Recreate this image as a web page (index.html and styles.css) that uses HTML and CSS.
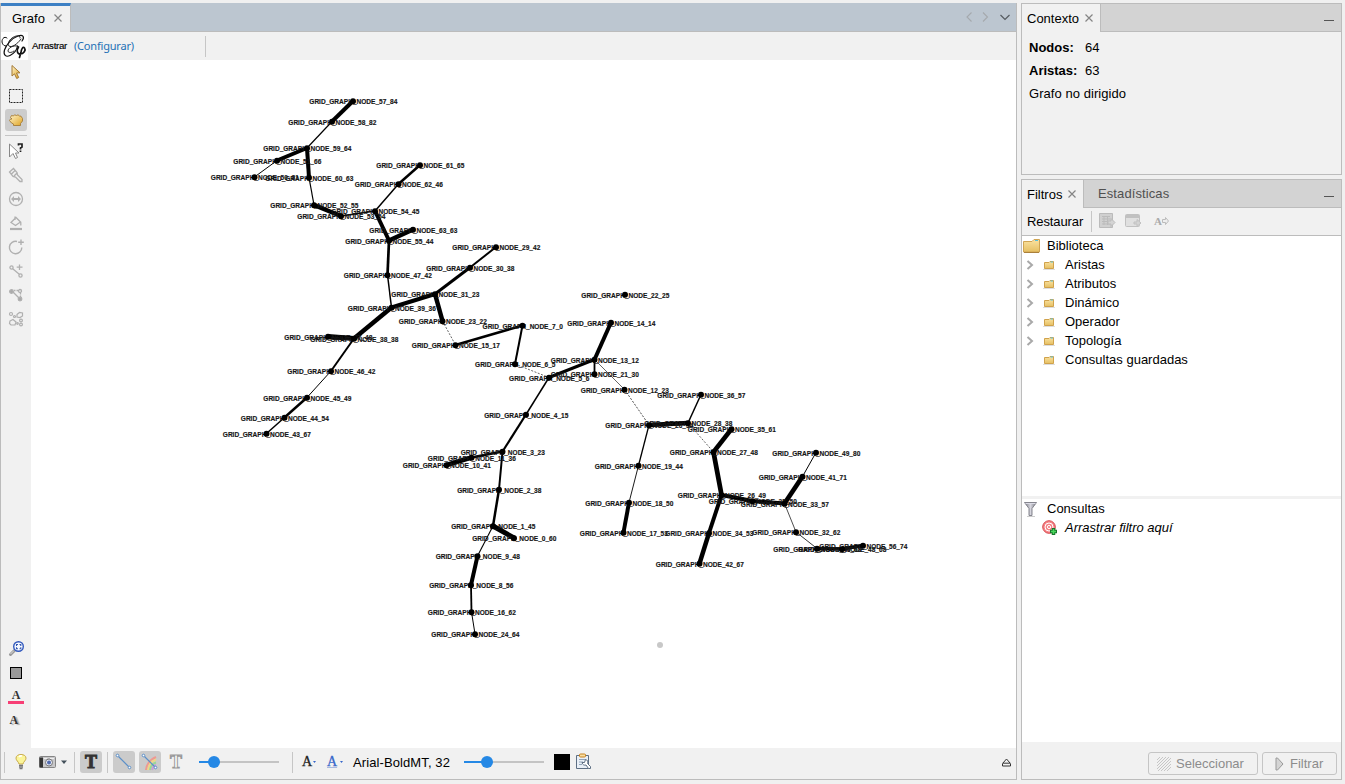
FILE: index.html
```html
<!DOCTYPE html>
<html lang="es">
<head>
<meta charset="utf-8">
<title>Grafo</title>
<link rel="stylesheet" href="styles.css">
</head>
<body>
<svg class="defs" width="0" height="0">
  <defs>
    <linearGradient id="gold" x1="0" y1="0" x2="1" y2="1"><stop offset="0" stop-color="#fff3cb"/><stop offset="1" stop-color="#dfa423"/></linearGradient>
    <linearGradient id="folder" x1="0" y1="0" x2="0" y2="1"><stop offset="0" stop-color="#fbe3a2"/><stop offset="1" stop-color="#e5bf62"/></linearGradient>
    <linearGradient id="metal" x1="0" y1="0" x2="1" y2="0"><stop offset="0" stop-color="#77777f"/><stop offset=".5" stop-color="#d6d6de"/><stop offset="1" stop-color="#75757f"/></linearGradient>
    <symbol id="small-folder" viewBox="0 0 12 10"><path d="M1.500 8.500V2.500H6L7 1.500H10.500V8.500Z" fill="url(#folder)" stroke="#d0a24c"/><path d="M7.500 2h2.500" stroke="#5bc0dc"/><path d="M0 9.500h12" stroke="#ddd"/></symbol>
    <symbol id="chevron" viewBox="0 0 8 10"><path d="M1.500 1L6 5L1.500 9" fill="none" stroke="#a9a9a9" stroke-width="2"/></symbol>
    <symbol id="close" viewBox="0 0 8 8"><path d="M.5 .5l7 7M7.500 .5l-7 7" stroke="#858585" stroke-width="1.200"/></symbol>
  </defs>
</svg>
<main class="window">
  <section class="panel graph-panel">
    <header class="tabs main-tabs">
      <div class="tab tab-main">Grafo <svg class="close" width="8" height="8"><use href="#close"/></svg></div>
      <svg class="tab-nav" width="46" height="12" viewBox="0 0 46 12" fill="none"><path d="M5.500 1.500L1 6l4.500 4.500M17 1.500L21.500 6L17 10.500" stroke="#a5a9ad" stroke-width="1.100"/><path d="M34.500 4L39 8.500L43.500 4" stroke="#555b60" stroke-width="1.200"/></svg>
    </header>
    <div class="configbar">
      <svg class="logo" width="27" height="28" viewBox="0 0 27 28" fill="none" stroke="#111" stroke-linecap="round">
        <path d="M5 14C1 14 0 9 2 6.500C3 5 5 5 6 6" stroke-width="1"/>
        <path d="M21 9C24 5 22 2 17 4C11 6 5 13 3.500 18C2 23 5 25.500 9 23.500C14 21 16 17 16.500 14" stroke-width="1.200"/>
        <path d="M19 6C20 3 15 3 11 6C7 9 6 14 9 14.500C13 15 18 10 20 7" stroke-width=".9"/>
        <path d="M16.500 14C12 13 7 16 7 19C7 21 11 21 13 19" stroke-width=".9"/>
        <path d="M17.500 15C15.500 18 16 22 19 22C23 22 25 18 23.500 16C22 14 20.500 17 20 20L18.500 25.500" stroke-width="1.700"/>
      </svg>
      <span class="mode">Arrastrar</span><span class="configure">(Configurar)</span><i class="vline config-line"></i>
    </div>
    <div class="workspace">
      <aside class="tools">
        <div class="tool"><svg width="16" height="16" viewBox="0 0 16 16"><path d="M4 1.500V12L6.500 9.800L8.700 14.500L10.700 13.500L8.500 9L12 8.800Z" fill="url(#gold)" stroke="#a27834"/></svg></div>
        <div class="tool"><svg width="16" height="16" viewBox="0 0 16 16"><rect x="1.500" y="1.500" width="13" height="13" fill="none" stroke="#222" stroke-dasharray="2 1"/></svg></div>
        <div class="tool"><span class="tool-button"><svg width="16" height="16" viewBox="0 0 16 16"><path d="M5.500 13.500V12L3.500 11L1.500 8.500L2.500 7H4L2.500 5.500L3.500 3.500L5.500 4L6.500 2.800L8.500 3.500L10 2.800L11.500 4L13 4.200L14.500 6.500V9L12.500 11.500V13.500Z" fill="url(#gold)" stroke="#a67c35" stroke-width=".9"/></svg></span></div>
        <div class="tool-sep"></div>
        <div class="tool"><svg width="16" height="18" viewBox="0 0 16 18"><path d="M1.500 2V15L5 11.500L7.500 16.500L9.500 15.500L7.500 11H11Z" fill="#fff" stroke="#888"/><path d="M10.500 3.500V2H14V5L12.500 6V7.500M12.500 8.500V10" fill="none" stroke="#222" stroke-width="1.700"/></svg></div>
        <div class="tool"><svg width="16" height="16" viewBox="0 0 16 16" fill="none" stroke="#b0b0b0" stroke-width="1.300"><path d="M1.500 5L5.500 1.500L9 5.500L9.500 8L14 12.500V14.500H12L7.500 10L5 9.500ZM3.500 7L7 3.500M6 9L9 6"/></svg></div>
        <div class="tool"><svg width="16" height="16" viewBox="0 0 16 16" fill="none" stroke="#b0b0b0" stroke-width="1.300"><circle cx="8" cy="8" r="6.500"/><path d="M4 8h8" stroke-width="2"/><path d="M6 5L3 8L6 11M10 5L13 8L10 11" fill="#b0b0b0" stroke="none"/></svg></div>
        <div class="tool"><svg width="16" height="16" viewBox="0 0 16 16" fill="none" stroke="#b0b0b0" stroke-width="1.300"><path d="M3 7.500L8 2.500L12.500 7L7.500 10.500ZM7 1.500V5M12.800 7V10.500"/><path d="M2 14h12" stroke-width="2.200"/></svg></div>
        <div class="tool"><svg width="16" height="16" viewBox="0 0 16 16" fill="none" stroke="#b0b0b0" stroke-width="1.400"><path d="M9 2.500A6.200 6.200 0 1 0 13.800 8.500M13 .5V6M10.200 3.200H15.800"/></svg></div>
        <div class="tool"><svg width="16" height="16" viewBox="0 0 16 16" fill="none" stroke="#b0b0b0" stroke-width="1.300"><circle cx="3.500" cy="4.500" r="1.600"/><circle cx="12.500" cy="12.500" r="1.600"/><path d="M4.700 5.700L11.300 11.300M11.500 1.500V7M8.700 4.200H14.500"/></svg></div>
        <div class="tool"><svg width="16" height="16" viewBox="0 0 16 16" fill="none" stroke="#b0b0b0" stroke-width="1.300"><path d="M4 4L12 12"/><circle cx="3.500" cy="4.500" r="1.800" fill="#aaa"/><circle cx="12" cy="12" r="1.800" fill="#aaa"/><circle cx="12" cy="4" r="1.500"/><path d="M6 3.500h4M12.500 6v4" stroke-dasharray="1.500 1"/></svg></div>
        <div class="tool"><svg width="16" height="16" viewBox="0 0 16 16" fill="none" stroke="#b0b0b0" stroke-width="1.200"><circle cx="3" cy="3" r="1.500"/><path d="M9 3.500L11.500 1.500L14.500 2V5L12 6.500L9 6ZM2 10L5 8.500L8 11L7 14H3L1.500 12.500Z"/><circle cx="6.500" cy="5.500" r="1"/><circle cx="9.500" cy="12.500" r=".8"/><circle cx="13" cy="9.500" r="1.400"/><circle cx="13" cy="13.500" r="1.400"/></svg></div>
        <div class="tools-bottom">
          <div class="tool"><svg width="17" height="17" viewBox="0 0 17 17"><path d="M6.500 10.500L2.500 14.500" stroke="#999" stroke-width="3" stroke-linecap="round"/><path d="M6 10.500L2.500 14" stroke="#ddd"/><circle cx="10.500" cy="6.500" r="4.800" fill="#f5f9ff" stroke="#3158bd" stroke-width="1.400"/><path d="M8.500 6V4.500H10M11.500 4.500H12.800V6M12.800 7.200V8.700H11.500M10 8.700H8.500V7.200" fill="none" stroke="#3155b0" stroke-width="1.100"/></svg></div>
          <div class="tool"><svg width="14" height="14" viewBox="0 0 14 14"><rect x="1.500" y="1.500" width="11" height="11" fill="#999" stroke="#000"/></svg></div>
          <div class="tool"><span class="glyph pink-letter">A</span></div>
          <div class="tool"><span class="glyph shadow-letter">A</span></div>
        </div>
      </aside>
      <div class="canvas"><svg id="graph" width="985" height="688" viewBox="31 60 985 688"></svg></div>
    </div>
    <footer class="bottom-bar">
      <i class="vline"></i>
      <svg class="bulb" width="14" height="18" viewBox="0 0 14 18"><path d="M5 11C4.500 8.500 2 7.500 2 5.200C2 2.800 4.200 1.500 7 1.500S12 2.800 12 5.200C12 7.500 9.500 8.500 9 11Z" fill="#fbf59a" stroke="#c8aa4b"/><path d="M5 4Q6 2.500 8 3" stroke="#fff" stroke-width="1.500" fill="none"/><path d="M5 12.300h4M5 14h4M5.500 15.700h3" stroke="#777" stroke-width="1.300"/></svg>
      <svg class="camera" width="17" height="14" viewBox="0 0 17 14"><rect x=".5" y="1.500" width="16" height="11" rx="1" fill="#c8c8ca" stroke="#858585"/><path d="M.5 2.500h3.500v10h-3.500z" fill="#333"/><path d="M5 3.500h3M11 3.500h4" stroke="#eee"/><circle cx="10" cy="7.500" r="3.500" fill="#e6eaf6" stroke="#777"/><circle cx="10" cy="7.500" r="2" fill="#526bad"/></svg>
      <svg class="caret" width="6" height="4" viewBox="0 0 6 4"><path d="M0 .5h6L3 4z" fill="#44515b"/></svg>
      <i class="vline line-a"></i>
      <span class="toggle text-toggle">T</span>
      <i class="vline line-b"></i>
      <span class="toggle edge-toggle"><svg width="18" height="18" viewBox="0 0 18 18"><path d="M3.500 3.500L14.500 14.500" stroke="#5b8fc8" stroke-width="1.200"/><circle cx="2.500" cy="2.500" r="1.300" fill="#fff" stroke="#5b8fc8"/><circle cx="14.500" cy="14.500" r="1.300" fill="#fff" stroke="#5b8fc8"/></svg></span>
      <span class="toggle color-toggle"><svg width="18" height="18" viewBox="0 0 18 18" fill="none"><path d="M5 17Q6 8 15 4" stroke="#ee9a92" stroke-width="2"/><path d="M7 17Q8 9 15 6.500" stroke="#efd786" stroke-width="2"/><path d="M9 17Q10 11 15 9.500" stroke="#9bd796" stroke-width="2"/><path d="M11 17Q12 13 15 12" stroke="#c9a0d8" stroke-width="2"/><path d="M3.500 3.500L14.500 14.500" stroke="#5b8fc8" stroke-width="1.200"/><circle cx="2.500" cy="2.500" r="1.300" fill="#fff" stroke="#5b8fc8"/><circle cx="14.500" cy="14.500" r="1.300" fill="#fff" stroke="#5b8fc8"/></svg></span>
      <span class="outline-t">T</span>
      <span class="slider slider-edge"><i class="slider-fill"></i><i class="slider-knob"></i></span>
      <i class="vline line-c"></i>
      <span class="font-mode">A</span><i class="tiny-caret"></i>
      <span class="font-mode blue">A</span><i class="tiny-caret"></i>
      <span class="font-name">Arial-BoldMT, 32</span>
      <span class="slider slider-label"><i class="slider-fill"></i><i class="slider-knob"></i></span>
      <i class="black-swatch"></i>
      <svg class="clipboard" width="17" height="18" viewBox="0 0 17 18"><path d="M1.500 2.500h12v13h-12z" fill="#e9eff6" stroke="#5d6e83"/><rect x="4.500" y="1" width="6" height="3" rx="1" fill="#f9dfa3" stroke="#c7811e"/><path d="M4 6.500h7M4 9h4M4 11.500h3" stroke="#91a4ba"/><path d="M10.500 6.500L9.500 9.500L7 9.500C7.500 12 9.500 12.500 11 12L13.500 15.500H15.500V13.500L12.500 10.500C13.500 8.500 12.500 7 10.500 6.500Z" fill="#fff" stroke="#5d6e83"/></svg>
      <svg class="expand" width="9" height="9" viewBox="0 0 9 9" fill="none" stroke="#333"><path d="M.8 5.200L4.500 1L8.200 5.200ZM.5 5.500V8H8.500V5.500"/></svg>
    </footer>
  </section>
  <div class="right-column">
    <section class="panel context-panel">
      <header class="tabs"><div class="tab tab-context">Contexto <svg class="close" width="8" height="8"><use href="#close"/></svg></div><i class="minimize"></i></header>
      <div class="context-content">
        <div class="context-row"><b>Nodos:</b><span>64</span></div>
        <div class="context-row"><b>Aristas:</b><span>63</span></div>
        <div class="context-row wide">Grafo no dirigido</div>
      </div>
    </section>
    <section class="panel filter-panel">
      <header class="tabs"><div class="tab tab-filter">Filtros <svg class="close" width="8" height="8"><use href="#close"/></svg></div><span class="inactive-tab">Estadísticas</span><i class="minimize"></i></header>
      <div class="filter-toolbar">
        <span class="reset">Restaurar</span><i class="vline"></i>
        <svg width="17" height="16" viewBox="0 0 17 16" fill="#ddd" stroke="#bbb"><path d="M.5 .5h13v14h-13z" fill="#d0d0d0"/><path d="M3 3.500h8M3 6h8M3 8.500h8M3 11h8M5 3v9M8.500 3v9"/><path d="M9 8h3V5.500l4 4-4 4V11H9z" fill="#d4d4d4"/></svg>
        <svg width="17" height="16" viewBox="0 0 17 16" fill="#e0e0e0" stroke="#c1c1c1"><rect x=".5" y="1.500" width="14" height="12" rx="1"/><path d="M1 3.500h13" stroke-width="3"/><path d="M9 9h3V6.500l4 3.500-4 3.500V11H9z" fill="#d4d4d4"/></svg>
        <span class="disabled-a">A<svg width="7" height="8" viewBox="0 0 7 8"><path d="M.5 2.500h3v-2l3 3.500-3 3.500v-2h-3z" fill="#eee" stroke="#bbb"/></svg></span>
      </div>
      <div class="tree library">
        <div class="tree-row root"><svg width="17" height="14" viewBox="0 0 17 14"><path d="M.5 13V2.500H9L11 .5H16.500V13Z" fill="url(#folder)" stroke="#d0a553"/><path d="M12 1.500h3" stroke="#57bdd8"/><path d="M1 13.500h15" stroke="#aa803b"/></svg><span>Biblioteca</span></div>
        <div class="tree-row"><svg class="arrow" width="8" height="10"><use href="#chevron"/></svg><svg class="mini" width="12" height="10"><use href="#small-folder"/></svg><span>Aristas</span></div>
        <div class="tree-row"><svg class="arrow" width="8" height="10"><use href="#chevron"/></svg><svg class="mini" width="12" height="10"><use href="#small-folder"/></svg><span>Atributos</span></div>
        <div class="tree-row"><svg class="arrow" width="8" height="10"><use href="#chevron"/></svg><svg class="mini" width="12" height="10"><use href="#small-folder"/></svg><span>Dinámico</span></div>
        <div class="tree-row"><svg class="arrow" width="8" height="10"><use href="#chevron"/></svg><svg class="mini" width="12" height="10"><use href="#small-folder"/></svg><span>Operador</span></div>
        <div class="tree-row"><svg class="arrow" width="8" height="10"><use href="#chevron"/></svg><svg class="mini" width="12" height="10"><use href="#small-folder"/></svg><span>Topología</span></div>
        <div class="tree-row"><i class="arrow"></i><svg class="mini" width="12" height="10"><use href="#small-folder"/></svg><span>Consultas guardadas</span></div>
      </div>
      <div class="tree queries">
        <div class="tree-row root"><svg width="17" height="16" viewBox="0 0 17 16"><path d="M1.500 1.500H13.500L9 7.500V14.500H6V7.500Z" fill="url(#metal)" stroke="#85858e"/><path d="M2.500 2.500h10" stroke="#dcdce6"/><path d="M4 15.500h8" stroke="#ccc"/></svg><span>Consultas</span></div>
        <div class="tree-row drop-row"><svg width="16" height="16" viewBox="0 0 16 16" fill="none"><circle cx="7" cy="7" r="6.300" fill="#f58387" stroke="#d84b50"/><circle cx="7" cy="7" r="4" stroke="#fff" stroke-width="1"/><circle cx="7" cy="7" r="1.600" stroke="#fff"/><path d="M11.500 8v7M8 11.500h7" stroke="#16752b" stroke-width="3.500"/><path d="M11.500 9v5M9 11.500h5" stroke="#49d95c" stroke-width="1.500"/></svg><em>Arrastrar filtro aquí</em></div>
      </div>
      <footer class="actions">
        <button class="action select" disabled><svg width="14" height="14" viewBox="0 0 14 14"><path d="M0 3L3 0M0 6L6 0M0 9L9 0M0 12L12 0M1 14L14 1M4 14L14 4M7 14L14 7M10 14L14 10" stroke="#c6c6c6"/></svg>Seleccionar</button>
        <button class="action run" disabled><svg width="9" height="14" viewBox="0 0 9 14"><path d="M1 1L2.500 1L8 7L2.500 13H1Z" fill="#d4d4d4" stroke="#999"/></svg>Filtrar</button>
      </footer>
    </section>
  </div>
</main>
<script src="graph.js"></script>
</body>
</html>
```
FILE: styles.css
```css
* { box-sizing: border-box; }
body { margin: 0; background: #f0f0f0; color: #000; font: 13px/19px "Liberation Sans", Arial, sans-serif; }
svg { display: block; flex: none; }
.defs { position: absolute; }
i { display: block; flex: none; }
.window { display: flex; gap: 4px; width: 1345px; height: 784px; padding: 3px 3px 4px 0; overflow: hidden; }
.panel { display: flex; flex-direction: column; border: 1px solid #bcbcbc; background: #f1f1f1; }
.graph-panel { width: 1017px; height: 777px; border-top: 0; }
.tabs { display: flex; align-items: center; height: 28px; flex: none; background: #d3d3d3; border-bottom: 1px solid #bcbcbc; }
.main-tabs { height: 29px; justify-content: space-between; background: #bcc6d0; }
.tab { display: flex; align-items: center; height: 28px; align-self: flex-start; background: #f1f1f1; border-right: 1px solid #bcbcbc; padding-left: 6px; white-space: nowrap; }
.tab-main { width: 70px; height: 29px; padding: 0 0 2px 11px; border-top: 3px solid #3d80c4; letter-spacing: .1px; }
.close { margin-left: auto; margin-right: 7px; }
.tab-main .close { margin-right: 8px; }
.tab-nav { margin-right: 4px; }
.configbar { display: flex; align-items: center; height: 28px; flex: none; }
.logo { background: #fff; }
.mode { width: 42px; margin-left: 4px; padding-bottom: 1px; font-size: 9.700px; letter-spacing: -.3px; -webkit-text-stroke: .15px #000; }
.configure { width: 131px; padding-bottom: 2px; color: #2470b5; font: 11px "Noto Sans", sans-serif; letter-spacing: -.2px; }
.vline { width: 1px; height: 21px; background: #c6c6c6; }
.workspace { display: flex; height: 688px; flex: none; }
.tools { display: flex; flex-direction: column; width: 30px; }
.tool { display: flex; align-items: center; justify-content: center; height: 24.1px; flex: none; }
.tool-button { display: grid; place-items: center; width: 22px; height: 22px; border-radius: 3px; background: #ccc; }
.tool-sep { width: 22px; height: 4px; margin: 0 0 2.500px 4px; border-bottom: 1px solid #c5c5c5; flex: none; }
.tools-bottom { margin-top: auto; margin-bottom: 15px; }
.glyph { font: bold 12px/12px "Liberation Serif", serif; color: #333; }
.pink-letter { width: 16px; height: 14px; border-bottom: 3px solid #f73f75; text-align: center; line-height: 10px; }
.shadow-letter { width: 13px; padding-bottom: 1px; text-shadow: 2px 1px 1px #aaa; }
.canvas { width: 985px; height: 688px; background: #fff; }
.edge { stroke: #000; }
.label { font: bold 6.550px "Liberation Sans", Arial, sans-serif; text-anchor: middle; fill: #151515; stroke: #151515; stroke-width: .15px; }
.bottom-bar { display: flex; align-items: center; height: 31px; padding: 0 4px 3px 3px; }
.bulb { margin-left: 9px; }
.camera { margin-left: 11px; }
.caret { margin-left: 5px; }
.line-a { margin-left: 7px; }
.line-b { margin-left: 5px; }
.toggle { display: grid; place-items: center; width: 22px; height: 22px; border-radius: 3px; background: #cbcbcb; }
.text-toggle { margin-left: 5px; font: bold 18px/20px "Liberation Serif", serif; color: #333; -webkit-text-stroke: 1px #333; }
.edge-toggle { margin-left: 5px; }
.color-toggle { margin-left: 4px; }
.outline-t { width: 16px; margin-left: 7px; text-align: center; font: bold 18px/20px "Liberation Serif", serif; color: #fff; -webkit-text-stroke: 1px #999; }
.slider { position: relative; width: 80px; height: 14px; flex: none; background: linear-gradient(#c4c4c4, #c4c4c4) center / 100% 2px no-repeat; }
.slider-edge { margin-left: 15px; --value: 15px; }
.slider-label { --value: 23px; margin-left: 12px; }
.slider-fill { width: var(--value); height: 2px; margin-top: 6px; background: #2588e5; }
.slider-knob { position: absolute; top: 1px; left: calc(var(--value) - 6px); width: 12px; height: 12px; border-radius: 50%; background: #2588e5; }
.line-c { margin-left: 13px; }
.font-mode { width: 10px; margin-left: 9px; font: 14px/20px "Liberation Serif", serif; color: #222; -webkit-text-stroke: .3px currentColor; }
.font-mode.blue { width: 12px; margin-left: 11px; color: #3767ca; text-decoration: underline; text-decoration-color: #a8b9df; }
.tiny-caret { width: 3px; height: 2px; margin-left: 1px; background: #3767ca; clip-path: polygon(0 0, 100% 0, 50% 100%); }
.font-name { width: 99px; margin-left: 10px; white-space: nowrap; letter-spacing: .1px; }
.black-swatch { width: 16px; height: 16px; margin-left: 10px; background: #000; }
.slider-label + .black-swatch { margin-left: 10px; }
.clipboard { margin-left: 5px; }
.expand { margin-left: auto; margin-right: 1px; }
.right-column { display: flex; flex-direction: column; gap: 4px; width: 321px; }
.context-panel { height: 172px; }
.filter-panel { height: 601px; }
.tab-context { width: 79px; padding-left: 5px; }
.tab-filter { width: 62px; padding-left: 5px; }
.inactive-tab { margin-left: 14px; color: #505050; letter-spacing: .1px; }
.minimize { width: 10px; height: 1px; margin: 5px 7px 0 auto; background: #555; }
.context-content { display: flex; flex-direction: column; padding: 4px 7px; }
.context-row { display: flex; height: 23px; line-height: 23px; }
.context-row b { width: 56px; }
.wide { letter-spacing: .06px; }
.filter-toolbar { display: flex; align-items: center; height: 28px; flex: none; border-bottom: 1px solid #bcbcbc; padding: 0 0 1px 5px; gap: 9px; }
.reset { width: 55px; letter-spacing: -.1px; }
.filter-toolbar > svg:first-of-type { margin-left: -2px; }
.disabled-a { display: flex; align-items: center; margin-left: 3px; color: #aaa; font: bold 11px "Liberation Serif", serif; }
.tree { background: #fff; }
.library { height: 260px; flex: none; }
.queries { height: 243px; flex: none; margin-top: 3px; }
.tree-row { display: flex; align-items: center; height: 19px; white-space: nowrap; }
.root svg { margin-left: 1px; margin-right: 7px; }
.arrow { width: 8px; margin-left: 4px; }
.mini { margin: 0 10px 0 9px; }
.drop-row svg { margin-left: 20px; margin-right: 7px; }
.actions { display: flex; justify-content: flex-end; gap: 4px; margin-top: auto; padding: 0 4px 4px; }
.action { display: flex; align-items: center; height: 23px; padding: 0; border: 1px solid #c5c5c5; border-radius: 3px; background: #f1f1f1; color: #8c8c8c; font: 13px "Liberation Sans", Arial, sans-serif; }
.select { width: 110px; gap: 5px; padding-left: 8px; }
.run { width: 75px; gap: 6px; padding-left: 12px; }
```
FILE: graph.js
```js
const nodes = {
  57: [353, 101, 84], 58: [332, 121.5, 82], 59: [307, 148, 64], 51: [277, 160.5, 66],
  50: [254.5, 177, 81], 60: [309, 177.5, 63], 52: [314, 205, 55], 53: [341, 216, 54],
  54: [375, 211, 45], 62: [398.5, 184, 46], 61: [420, 165, 65], 63: [413, 229.5, 63],
  55: [389, 240.5, 44], 47: [387.5, 275, 42], 39: [391.5, 307.5, 36], 31: [435, 294, 23],
  30: [470, 267.5, 38], 29: [496, 247, 42], 23: [442.5, 321, 22], 15: [455.5, 345, 17],
  7: [522.5, 325.5, 0], 6: [515, 364, 5], 5: [549, 377.5, 6], 37: [328, 336.5, 48],
  38: [354, 338.5, 38], 46: [331, 371, 42], 45: [307, 397.5, 49], 44: [284.5, 417.5, 54],
  43: [266.5, 433.5, 67], 22: [625, 294.5, 25], 14: [611, 322.5, 14], 13: [594.5, 359.5, 12],
  21: [594.5, 374, 30], 12: [624.5, 389.5, 23], 4: [526, 414.5, 15], 3: [502.5, 451.5, 23],
  11: [471.5, 457.5, 36], 10: [446.5, 465, 41], 2: [499, 489.5, 38], 1: [493, 526, 45],
  0: [514, 538, 60], 9: [477.5, 556, 48], 8: [471, 585, 56], 16: [471.5, 612, 62],
  24: [475, 634, 64], 20: [649, 425, 34], 28: [688, 423, 38], 36: [701, 394.5, 57],
  35: [731.5, 429, 61], 27: [713.5, 452, 48], 26: [721.5, 495, 49], 25: [752.5, 501, 50],
  33: [784.5, 503.5, 57], 41: [802.500, 476.5, 71], 49: [816, 452.5, 80], 32: [796, 532, 62],
  40: [817, 548.5, 68], 48: [842, 549, 68], 56: [863, 545.5, 74], 19: [638.5, 465.5, 44],
  18: [629, 502.5, 50], 17: [623.5, 532.5, 53], 34: [709, 533, 53], 42: [699.5, 563.5, 67]
};
// Each edge is source, target, stroke width and an optional dash flag.
const edges = [
  [57,58,4],[58,59,1.2],[59,51,4],[51,50,1],[59,60,4],[60,52,1.2],[52,53,4.5],[53,54,1.5],
  [54,62,1.5],[62,61,2.5],[54,55,4],[55,63,4.5],[55,47,2.7],[47,39,1.5],[39,31,4],[31,30,3],
  [30,29,2],[31,23,4.5],[23,15,.6,1],[15,7,2.5],[7,6,2],[6,5,.6,1],[39,38,4.5],[37,38,5],
  [38,46,2],[46,45,1],[45,44,2.5],[44,43,1.5],[5,13,3],[13,14,4],[13,21,1.8],[13,12,.6],
  [12,20,.7,1],[5,4,1.5],[4,3,2.2],[3,11,2.5],[11,10,4.5],[3,2,2],[2,1,2.5],[1,0,5],
  [1,9,1.1],[9,8,4],[8,16,1.8],[16,24,1],[20,28,4.5],[28,36,1.5],[28,27,.6,1],[20,19,1.3],
  [19,18,.9],[18,17,4],[27,35,4.5],[27,26,4.7],[26,25,4],[25,33,4],[26,34,4],[34,42,4.5],
  [33,41,4.7],[41,49,1],[33,32,.7],[32,40,.8],[40,48,3.5],[48,56,3.5]
];
const graph = document.getElementById('graph');
function add(tag, attributes, text) {
  const element = document.createElementNS('http://www.w3.org/2000/svg', tag);
  for (const key in attributes) element.setAttribute(key, attributes[key]);
  if (text) element.textContent = text;
  graph.appendChild(element);
}
for (const [from, to, width, dashed] of edges) {
  const [x1, y1] = nodes[from];
  const [x2, y2] = nodes[to];
  add('line', { class: 'edge', x1, y1, x2, y2, 'stroke-width': width, 'stroke-dasharray': dashed ? '2 1.5' : 'none' });
}
for (const id in nodes) {
  const [x, y, value] = nodes[id];
  const name = `GRID_GRAPH_NODE_${id}_${value}`;
  add('text', { class: 'label', x: x + 0.3, y: y + 3.3, textLength: 88 - (21 - name.length) * 3.8 }, name);
}
for (const id in nodes) add('circle', { cx: nodes[id][0], cy: nodes[id][1] + 0.2, r: 3 });
add('circle', { cx: 660, cy: 645, r: 3, fill: '#c8c8c8' });
```
